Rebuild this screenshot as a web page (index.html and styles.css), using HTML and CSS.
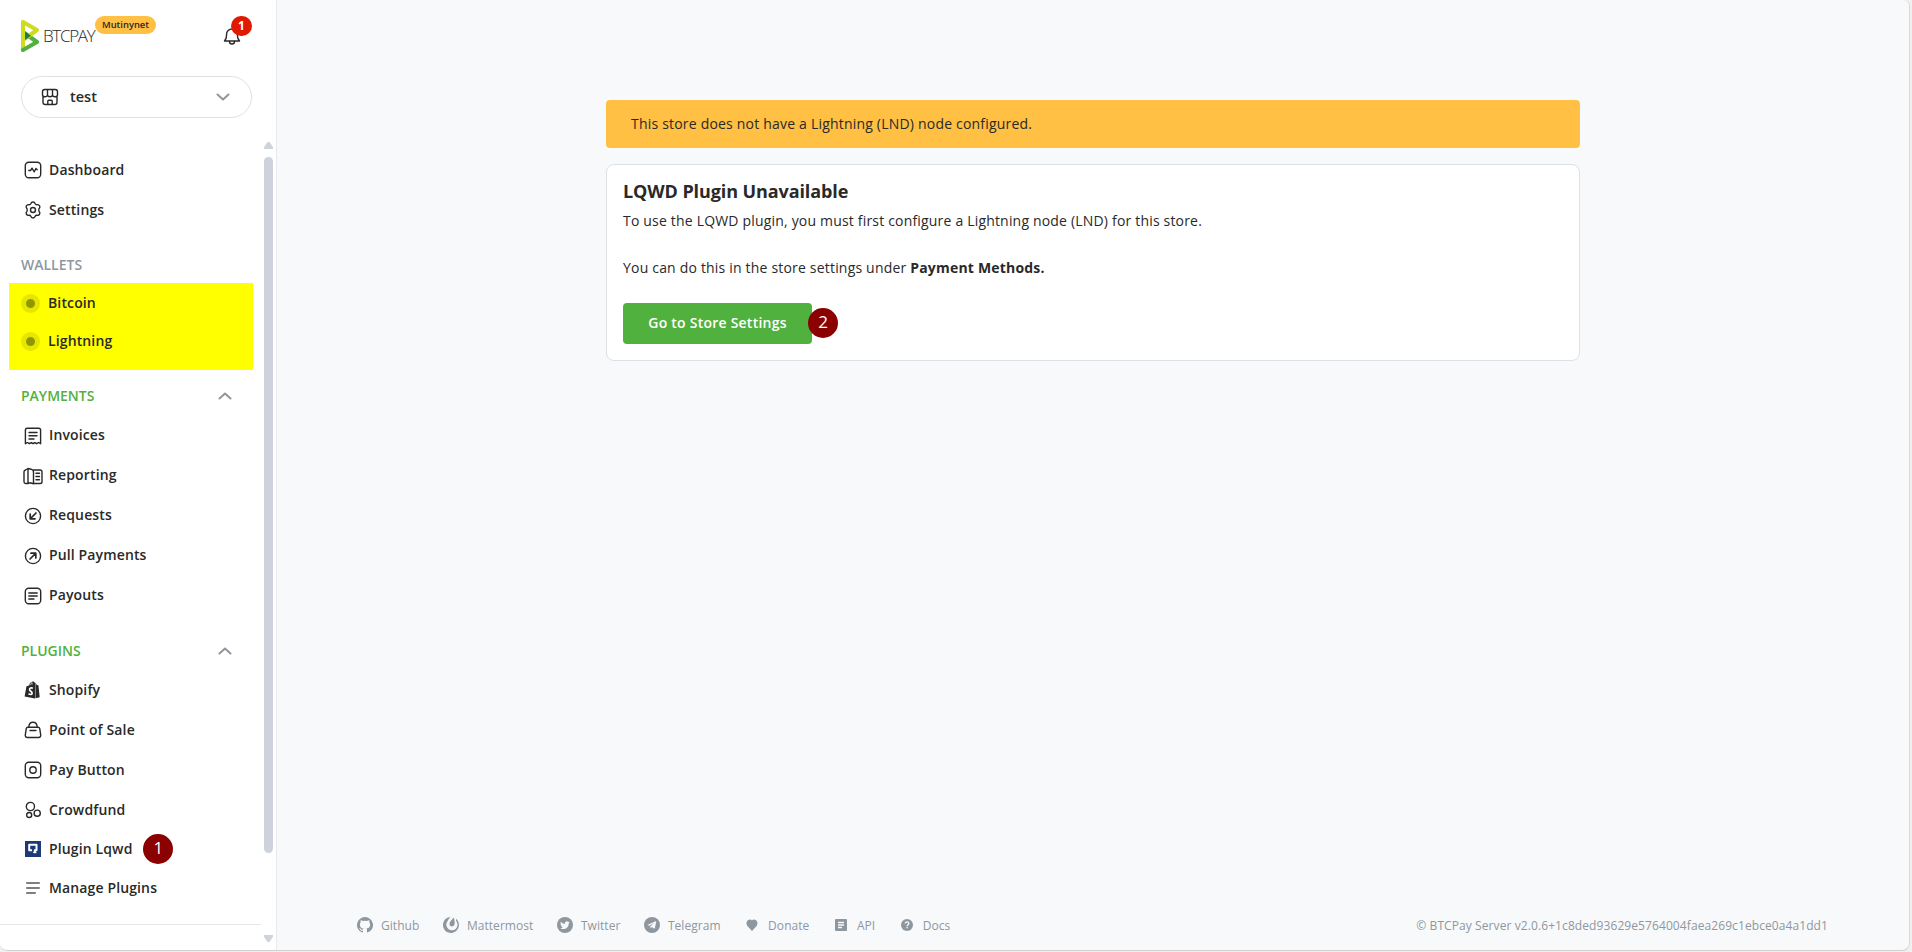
FILE: index.html
```html
<!DOCTYPE html>
<html lang="en">
<head>
<meta charset="utf-8">
<title>BTCPay Server</title>
<link rel="stylesheet" href="styles.css">
</head>
<body>
<div class="window">
  <aside class="sidebar">
    <header class="brand">
      <svg class="brand-mark" width="18" height="32" viewBox="0 0 18 32"><path d="M2 2v28" stroke="#cedc21" stroke-width="4" stroke-linecap="round"/><path d="M2 30l14-8L2 12" fill="none" stroke="#51b13e" stroke-width="4" stroke-linecap="round" stroke-linejoin="round"/><path d="M2 20V2l14 8L2 20" fill="none" stroke="#cedc21" stroke-width="4" stroke-linecap="round" stroke-linejoin="round"/><path d="M4 11.500v8.500l6-4.300z" fill="#1e7a44"/></svg>
      <span class="brand-name">BTCPAY</span>
      <span class="brand-env">Mutinynet</span>
      <span class="bell"><svg width="18" height="18" viewBox="0 0 18 18" class="line"><path d="M1.500 14h15c-1.400-1.600-2-2.500-2-5V7.500a5.500 5.500 0 0 0-11 0V9c0 2.500-.6 3.400-2 5z"/><path d="M6.500 14.500a2.500 2.500 0 0 0 5 0"/></svg><b class="bell-count">1</b></span>
    </header>
    <div class="store">
      <svg width="18" height="18" viewBox="0 0 18 18" class="line"><path d="M3.800 1.500h10.400c1.300 0 2.300 1 2.300 2.300v3a2.500 2 0 0 1-5 0 2.500 2 0 0 1-5 0 2.500 2 0 0 1-5 0v-3c0-1.300 1-2.300 2.300-2.300zM6.500 1.500v5.400M11.500 1.500v5.400M2 8.500v5.700c0 1.300 1 2.300 2.300 2.300h9.400c1.300 0 2.300-1 2.300-2.300V8.500M6.800 16.300v-3.100c0-.5.400-.9.900-.9h2.600c.5 0 .9.400.9.900v3.100"/></svg>
      <span>test</span>
      <svg width="14" height="8" viewBox="0 0 14 8" class="chevron"><path d="M1.500 1.500L7 6.500l5.500-5"/></svg>
    </div>
    <div class="scroll-area">
      <nav class="nav">
        <a class="item"><svg viewBox="0 0 18 18" class="line"><rect x="1.300" y="1.300" width="15.400" height="15.400" rx="3.500"/><path d="M4.800 9.500h1.700L8 7.200l2.300 3.600 1.600-3.300 1.300 1.300"/></svg>Dashboard</a>
        <a class="item"><svg viewBox="0 0 18 18" class="line"><path d="M9 1c1 0 1.800.6 2.200 1.700.3.700 1 1.100 1.800 1 1.200-.2 2.100.2 2.600 1.100s.4 1.800-.4 2.700c-.5.600-.5 2.400 0 3 .8.900.9 1.800.4 2.700s-1.400 1.300-2.600 1.100c-.8-.1-1.500.3-1.800 1C10.800 16.400 10 17 9 17s-1.800-.6-2.200-1.700c-.3-.7-1-1.100-1.800-1-1.200.2-2.100-.2-2.600-1.100s-.4-1.800.4-2.700c.5-.6.500-2.400 0-3-.8-.9-.9-1.800-.4-2.700s1.400-1.300 2.600-1.100c.8.1 1.500-.3 1.800-1C7.200 1.600 8 1 9 1z"/><circle cx="9" cy="9" r="2.500"/></svg>Settings</a>
        <h2 class="section wallets-head">WALLETS</h2>
        <div class="wallets">
          <a class="wallet"><i class="dot"></i>Bitcoin</a>
          <a class="wallet"><i class="dot"></i>Lightning</a>
        </div>
        <h2 class="section green payments-head">PAYMENTS<svg width="14" height="8" viewBox="0 0 14 8" class="chevron"><path d="M1.500 6.500L7 1.500l5.500 5"/></svg></h2>
        <div class="payments">
          <a class="item"><svg viewBox="0 0 18 18" class="line"><path d="M1.400 16.700V3.200c0-1 .7-1.900 1.900-1.900h11.400c1.200 0 1.900.9 1.900 1.900v13.500l-2-1.200-1.900 1.200-1.900-1.200L9 16.700l-1.800-1.200-1.900 1.200-1.900-1.200z"/><path d="M5 5.500h8M5 8.800h8M5 12h5"/></svg>Invoices</a>
          <a class="item"><svg viewBox="0 0 20 18" class="line wide"><path d="M5 1.500L2.500 3c-1 .3-1.500.8-1.500 1.800v10c0 1 .6 1.700 1.600 1.700H5zM5 1.500l3 .7c1.400.5 2.500 1 2.500 2.500v12L7 15.800 5 16.500M10 3h7c1.200 0 2 .7 2 1.800v9.900c0 1.100-.8 1.800-2 1.800h-7M13 6.300h3.500M13 9.500h3.500M13 12.700h3.500"/></svg>Reporting</a>
          <a class="item"><svg viewBox="0 0 18 18" class="line"><circle cx="9" cy="9" r="7.600"/><path d="M12 6l-5.500 5.500M6.200 7v4.800H11" stroke-width="1.700"/></svg>Requests</a>
          <a class="item"><svg viewBox="0 0 18 18" class="line"><circle cx="9" cy="9" r="7.600"/><path d="M6 12l5.500-5.500M7 6.200h4.800V11" stroke-width="1.700"/></svg>Pull Payments</a>
          <a class="item"><svg viewBox="0 0 18 18" class="line"><rect x="1.300" y="1.300" width="15.400" height="15.400" rx="3.500"/><path d="M4.800 6h8.400M4.800 9h8.400M4.800 12h5.200"/></svg>Payouts</a>
        </div>
        <h2 class="section green plugins-head">PLUGINS<svg width="14" height="8" viewBox="0 0 14 8" class="chevron"><path d="M1.500 6.500L7 1.500l5.500 5"/></svg></h2>
        <a class="item"><svg viewBox="0 0 18 18"><path d="M2.500 5.200L5 4.500C5.500 2.600 6.900.7 8.800.5c.9 0 1.400.4 1.800 1.100l1 .4L11 17.400.6 15.600z" fill="#292929"/><path d="M11.800 2.800l1.200 1.300 1.400.2 1.300 12-4.300 1z" fill="#292929"/><path d="M6 4.200c.4-1.300 1.200-2.300 2.200-2.600M8 3.700c.1-.9.100-1.600-.2-2" stroke="#fff" stroke-width=".7" fill="none"/><path d="M8.900 7.200C7 6.400 5.500 7.200 5.600 8.700c.1 1.600 2.600 1.700 2.500 3.500-.1 1.500-1.700 1.700-3.600.6" stroke="#fff" stroke-width="1.700" fill="none"/></svg>Shopify</a>
        <a class="item"><svg viewBox="0 0 18 18" class="line"><path d="M3.800 6.300h10.400c.8 0 1.300.4 1.500 1.100l1 6.500c.2 1.500-.6 2.600-2.100 2.600H3.400c-1.500 0-2.300-1.100-2.100-2.600l1-6.500c.2-.7.700-1.100 1.500-1.100zM4.800 6C5 3.200 6.700 1.300 9 1.300S13 3.200 13.200 6M6 9.500h6"/></svg>Point of Sale</a>
        <a class="item"><svg viewBox="0 0 18 18" class="line"><rect x="1.300" y="1.300" width="15.400" height="15.400" rx="3.500"/><circle cx="9" cy="9" r="3.200"/></svg>Pay Button</a>
        <a class="item"><svg viewBox="0 0 18 18" class="line"><circle cx="6.400" cy="5.500" r="4.100"/><circle cx="13.200" cy="12.200" r="3.100"/><circle cx="5.200" cy="14" r="2.500"/></svg>Crowdfund</a>
        <a class="item lqwd"><svg viewBox="0 0 18 18"><rect x="1" y="1" width="16" height="16" fill="#1b3a77"/><path d="M8 10.300H5.200V4.700h7.300v5.600H10.800v3" fill="none" stroke="#fff" stroke-width="2" stroke-linejoin="round"/><path d="M9.200 12.300h3.200" stroke="#fff" stroke-width="1.200"/></svg>Plugin Lqwd<b class="step">1</b></a>
        <a class="item"><svg viewBox="0 0 18 18" class="line menu"><path d="M2.700 4h12.600M2.700 9h12.600M2.700 14h8.600"/></svg>Manage Plugins</a>
        <hr class="nav-end">
      </nav>
      <div class="scrollbar"><i class="up"></i><i class="thumb"></i><i class="down"></i></div>
    </div>
  </aside>
  <main class="main">
    <div class="content">
      <div class="alert">This store does not have a Lightning (LND) node configured.</div>
      <section class="card">
        <h1>LQWD Plugin Unavailable</h1>
        <p class="lead">To use the LQWD plugin, you must first configure a Lightning node (LND) for this store.</p>
        <p class="hint">You can do this in the store settings under <b>Payment Methods.</b></p>
        <div class="action"><a class="button">Go to Store Settings</a><b class="step">2</b></div>
      </section>
    </div>
    <footer class="footer">
      <div class="links">
        <a><svg viewBox="0 0 16 16"><path d="M8 0a8 8 0 0 0-2.500 15.600c.4.100.5-.2.500-.4v-1.500c-2.200.5-2.700-1-2.700-1-.4-.9-.9-1.200-.9-1.200-.7-.5.100-.5.100-.5.800.1 1.200.8 1.200.8.700 1.200 1.900.9 2.300.7.100-.5.300-.9.500-1.100-1.800-.2-3.600-.9-3.600-4 0-.9.300-1.600.8-2.100-.1-.2-.4-1 .1-2.100 0 0 .7-.2 2.200.8a7.500 7.500 0 0 1 4 0c1.500-1 2.200-.8 2.200-.8.400 1.100.2 1.900.1 2.100.5.600.8 1.300.8 2.100 0 3.100-1.900 3.700-3.700 3.900.3.300.6.800.6 1.500v2.400c0 .2.100.5.500.4A8 8 0 0 0 8 0z"/></svg>Github</a>
        <a><svg viewBox="0 0 16 16"><path d="M7.500 0A8 8 0 1 0 13 1.800l.1 2.100A5.600 5.600 0 1 1 4.700 4C5.500 2.300 6.300 1 7.500 0z"/><path d="M10.900.6c.5 2.500 1.300 5.200.5 7.200-1 2.300-4.400 2-4.900-.3-.3-2.500 2-4.500 4.400-6.900z"/></svg>Mattermost</a>
        <a><svg viewBox="0 0 16 16"><circle cx="8" cy="8" r="8"/><path d="M12.800 5.200l-1.100.4c.4-.3.700-.7.800-1.100l-1.200.5a2 2 0 0 0-3.400 1.800C6.300 6.700 4.800 6 3.800 4.700c-.5.900-.2 2 .6 2.600l-.9-.2c0 1 .7 1.700 1.600 1.900h-.9c.3.800 1 1.400 1.800 1.400-.8.600-1.800.9-2.800.8 4.200 2.300 8.600-.4 8.500-4.800z" fill="#f8f9fb"/></svg>Twitter</a>
        <a><svg viewBox="0 0 16 16"><circle cx="8" cy="8" r="8"/><path d="M3.300 7.900l8.300-3.600c.5-.1.700.1.600.6l-1.400 6.300c-.1.500-.5.500-.9.300L7.700 10l-1.100 1.400-.3-2L10 5.900 5.400 8.800z" fill="#f8f9fb"/></svg>Telegram</a>
        <a><svg viewBox="0 0 16 16"><path d="M8 14L3.800 9.600C.8 6 3.500 2 6.400 2.500 7.200 2.700 8 3.500 8 3.500s.8-.8 1.600-1c2.900-.5 5.600 3.500 2.600 7.100z"/></svg>Donate</a>
        <a><svg viewBox="0 0 16 16"><rect x="2" y="2" width="12" height="12" rx="1"/><path d="M5 5.500h6M5 8h6M5 10.500h4" stroke="#f8f9fb" stroke-width="1.300"/></svg>API</a>
        <a><svg viewBox="0 0 16 16"><circle cx="8" cy="8" r="6"/><path d="M6.300 6.600c0-2.300 3.500-2.100 3.500-.1 0 1.200-1.700 1.300-1.700 2.700m0 .9v1.200" fill="none" stroke="#f8f9fb" stroke-width="1.300"/></svg>Docs</a>
      </div>
      <span class="version">© BTCPay Server v2.0.6+1c8ded93629e5764004faea269c1ebce0a4a1dd1</span>
    </footer>
  </main>
</div>
</body>
</html>
```
FILE: styles.css
```css
* { box-sizing: border-box; }
body { margin: 0; background: #f0f0f0; font-family: "Open Sans", "Noto Sans", sans-serif; color: #292929; font-size: 14px; white-space: nowrap; }
h1, h2, p { margin: 0; }
svg { flex: none; }
.window { display: flex; width: 1910px; height: 951px; border-right: 1px solid #d8d8d8; border-bottom: 1px solid #d0d0d0; border-radius: 0 6px 8px 8px; overflow: hidden; background: #f8f9fb; }
.line { fill: none; stroke: #292929; stroke-width: 1.4; stroke-linecap: round; stroke-linejoin: round; }
.chevron { fill: none; stroke: #8f979e; stroke-width: 2; stroke-linecap: round; stroke-linejoin: round; }

.sidebar { width: 277px; flex: none; display: flex; flex-direction: column; background: #fff; border-right: 1px solid #e6e9ed; }
.brand { display: flex; align-items: flex-start; height: 76px; padding: 16px 25px 0 21px; }
.brand-mark { margin-top: 4px; }
.brand-name { width: 52px; margin-left: 4px; margin-top: 8px; font-size: 17px; font-weight: 300; line-height: 24px; letter-spacing: -1.300px; }
.brand-env { width: 61px; height: 18px; border-radius: 9px; background: #ffc043; font-size: 9.400px; font-weight: 600; line-height: 18px; text-align: center; }
.bell { position: relative; margin-left: auto; margin-top: 11px; width: 28px; height: 18px; }
.bell-count { position: absolute; left: 8px; top: -11px; width: 21px; height: 20px; border-radius: 10px; background: #e11900; color: #fff; font-size: 12px; line-height: 19px; text-align: center; }
.store { display: flex; align-items: center; width: 231px; height: 42px; margin-left: 21px; padding: 0 21px 0 19px; border: 1px solid #dee2e6; border-radius: 21px; font-size: 14.500px; font-weight: 600; }
.store span { margin: 0 0 2px 11px; }
.store .chevron { margin-left: auto; }
.scroll-area { display: flex; flex: 1; margin-top: 20px; }
.nav { width: 261px; padding-top: 12px; font-weight: 600; letter-spacing: .13px; }
.item { display: flex; align-items: center; height: 40px; padding: 0 0 2px 24px; }
.item svg { width: 18px; height: 18px; margin: 2px 7px 0 0; }
.item .wide { width: 20px; margin: 2px 6px 0 -1px; }
.payments svg, .payments .wide { margin-top: 4px; }
.item .menu { stroke: #555; }
.section { display: flex; align-items: center; justify-content: space-between; padding: 0 29px 2px 21px; font-size: 14px; font-weight: 600; letter-spacing: 0; color: #8f979e; }
.section svg { margin-top: 2px; }
.section.green { color: #51b13e; }
.wallets-head { height: 35px; margin-top: 18px; }
.wallets { width: 244px; height: 87px; margin-left: 9px; padding: 1px 0 0 12px; background: #ff0; }
.wallet { display: flex; align-items: center; height: 38px; gap: 8px; padding-bottom: 1px; }
.dot { width: 19px; height: 19px; margin-top: 1px; border: 5px solid #e6e600; border-radius: 50%; background: #8f9700; }
.payments-head { height: 38px; margin-top: 7px; }
.plugins-head { height: 38px; margin-top: 17px; }
.lqwd { height: 38px; }
.step { display: inline-flex; align-items: center; justify-content: center; width: 30px; height: 30px; border-radius: 50%; background: #8b0000; color: #fff; font-size: 17px; font-weight: 400; line-height: 20px; padding-bottom: 2px; }
.lqwd .step { margin: 2px 0 0 11px; }
.nav-end { height: 1px; margin: 16px 0 0; border: 0; background: #e6e6e6; }
.scrollbar { display: flex; flex-direction: column; align-items: center; width: 9px; margin: 4px 0 8px 3px; }
.up, .down { width: 9px; height: 7px; background: #ced4da; }
.up { clip-path: polygon(38% 0, 62% 0, 100% 75%, 100% 100%, 0 100%, 0 75%); }
.down { margin-top: auto; clip-path: polygon(0 0, 100% 0, 100% 25%, 62% 100%, 38% 100%, 0 25%); }
.thumb { width: 9px; height: 696px; margin-top: 8px; border-radius: 4.500px; background: #ced2dd; }

.main { flex: 1; display: flex; flex-direction: column; padding: 100px 81px 0 80px; }
.content { width: 974px; margin-left: 249px; }
.alert { height: 48px; padding-left: 25px; border-radius: 4px; background: #ffc043; line-height: 48px; letter-spacing: .2px; }
.card { height: 197px; margin-top: 16px; padding: 14px 16px; border: 1px solid #dee2e6; border-radius: 8px; background: #fff; }
h1 { font-size: 18px; line-height: 24px; letter-spacing: -.1px; }
.lead { margin-top: 6px; line-height: 24px; letter-spacing: .185px; }
.hint { margin-top: 23px; line-height: 24px; letter-spacing: .19px; }
.action { display: flex; align-items: center; height: 41px; margin-top: 23px; }
.button { width: 189px; height: 41px; border-radius: 4px; background: #51b13e; color: #fff; font-weight: 600; line-height: 39px; letter-spacing: .23px; text-align: center; }
.action .step { margin: -1px 0 0 -4px; }
.footer { display: flex; justify-content: space-between; align-items: center; height: 50px; margin-top: auto; color: #8f979e; font-size: 12px; }
.links { display: flex; gap: 23.500px; letter-spacing: .05px; }
.links a { display: flex; align-items: center; gap: 8px; }
.links svg { width: 16px; height: 16px; margin-bottom: 1px; fill: #8f979e; }
.version { letter-spacing: .09px; }
```
